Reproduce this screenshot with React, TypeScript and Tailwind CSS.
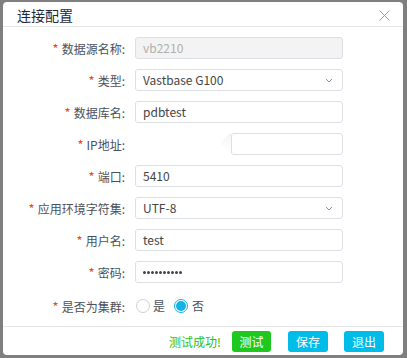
import React from "react";

const font = { fontFamily: '"Noto Sans CJK SC", "Noto Sans", sans-serif' };

function Label({ text }: { text: string }) {
    return (
        <div className="w-[122px] shrink-0 text-right text-[12px] text-[#4b505a] leading-none">
            <span className="text-[#f0441c] mr-[3px] text-[13px]">*</span>
            {text}:
        </div>
    );
}

function Row({ label, children }: { label: string; children: React.ReactNode }) {
    return (
        <div className="flex items-center h-[22px]">
            <Label text={label} />
            <div className="ml-[10px] w-[208px] h-full flex">{children}</div>
        </div>
    );
}

function Input({ value, disabled }: { value: React.ReactNode; disabled?: boolean }) {
    return (
        <div
            className={`w-full h-full rounded-[3px] border border-[#dcdfe6] flex items-center px-[7px] text-[12px] ${
                disabled ? "bg-[#f3f3f3] text-[#b0b0b0]" : "bg-white text-[#444]"
            }`}
        >
            {value}
        </div>
    );
}

function Select({ value }: { value: string }) {
    return (
        <div className="w-full h-full rounded-[3px] border border-[#dcdfe6] bg-white flex items-center justify-between px-[7px] text-[12px] text-[#444]">
            <span>{value}</span>
            <svg width="8" height="5" viewBox="0 0 8 5" className="mr-[2px]">
                <path d="M1 1 L4 4 L7 1" fill="none" stroke="#8a8f99" strokeWidth="1" />
            </svg>
        </div>
    );
}

function Dots({ count }: { count: number }) {
    return (
        <div className="flex items-center gap-[1px]">
            {Array.from({ length: count }).map((_, i) => (
                <span key={i} className="w-[3px] h-[3px] rounded-full bg-[#444]" />
            ))}
        </div>
    );
}

export default function App() {
    return (
        <div className="w-[407px] h-[358px] bg-[#7f7f7f] pt-[2px] pl-[3px] pr-[4px] pb-[3px]" style={font}>
            <div className="w-[400px] h-[353px] bg-white rounded-[4px] flex flex-col">
                {/* header */}
                <div className="h-[25px] border-b border-[#e6e6e6] flex items-center justify-between pl-[14px] pr-[13px]">
                    <span className="text-[14px] text-[#1f2937] mt-[3px]">连接配置</span>
                    <svg width="11" height="11" viewBox="0 0 11 11" className="mt-[2px]">
                        <path d="M0.5 0.5 L10.5 10.5 M10.5 0.5 L0.5 10.5" stroke="#9a9a9a" strokeWidth="1" />
                    </svg>
                </div>

                {/* form */}
                <div className="flex flex-col gap-[10px] pt-[10px] flex-1">
                    <Row label="数据源名称">
                        <Input value="vb2210" disabled />
                    </Row>
                    <Row label="类型">
                        <Select value="Vastbase G100" />
                    </Row>
                    <Row label="数据库名">
                        <Input value="pdbtest" />
                    </Row>
                    <Row label="IP地址">
                        <div className="ml-auto w-[112px] h-full relative">
                            <div className="absolute -left-[8px] top-[3px] w-[14px] h-[14px] rotate-45 bg-gradient-to-br from-[#f4f4f4] to-white" />
                            <div className="relative w-full h-full rounded-[3px] border border-[#dcdfe6] bg-white" />
                        </div>
                    </Row>
                    <Row label="端口">
                        <Input value="5410" />
                    </Row>
                    <Row label="应用环境字符集">
                        <Select value="UTF-8" />
                    </Row>
                    <Row label="用户名">
                        <Input value="test" />
                    </Row>
                    <Row label="密码">
                        <Input value={<Dots count={10} />} />
                    </Row>
                    <div className="flex items-center h-[22px] mt-[2px]">
                        <Label text="是否为集群" />
                        <div className="ml-[11px] flex items-center text-[12px] text-[#4b505a]">
                            <span className="w-[14px] h-[14px] rounded-full border border-[#d0d0d0] bg-white" />
                            <span className="ml-[3px]">是</span>
                            <span className="ml-[9px] w-[14px] h-[14px] rounded-full border border-[#11b3e8] flex items-center justify-center">
                                <span className="w-[10px] h-[10px] rounded-full bg-[#11b3e8]" />
                            </span>
                            <span className="ml-[4px]">否</span>
                        </div>
                    </div>
                </div>

                {/* footer */}
                <div className="h-[29px] border-t border-[#e6e6e6] flex items-center justify-end pr-[19px] pt-[1px]">
                    <span className="text-[12px] text-[#1ec21e] mr-[11px]">测试成功!</span>
                    <button className="w-[39px] h-[21px] rounded-[3px] bg-[#1ec81e] text-white text-[12px]">测试</button>
                    <button className="ml-[17px] w-[40px] h-[21px] rounded-[3px] bg-[#00bce8] text-white text-[12px]">保存</button>
                    <button className="ml-[16px] w-[40px] h-[21px] rounded-[3px] bg-[#00bce8] text-white text-[12px]">退出</button>
                </div>
            </div>
        </div>
    );
}
